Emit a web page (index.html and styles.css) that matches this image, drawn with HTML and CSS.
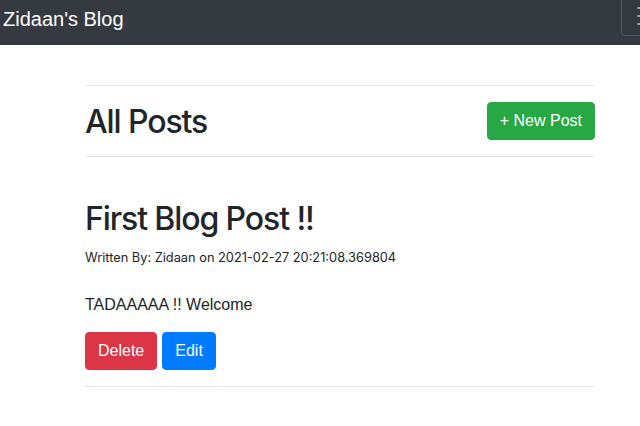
FILE: index.html
```html
<!DOCTYPE html>
<html>
<head>
<meta charset="utf-8">
<link rel="stylesheet" href="styles.css">
</head>
<body>
<nav class="navbar">
  <a class="brand" href="#">Zidaan's Blog</a>
  <button class="toggler" type="button" aria-label="Toggle navigation">
    <svg width="30" height="30" viewBox="0 0 30 30"><path stroke="rgba(255,255,255,0.5)" stroke-width="2" stroke-linecap="round" stroke-miterlimit="10" d="M4 7h22M4 15h22M4 23h22"/></svg>
  </button>
</nav>
<main class="container">
  <hr class="rule">
  <div class="head-row">
    <h2 class="title">All Posts</h2>
    <a class="btn btn-green" href="#">+ New Post</a>
  </div>
  <hr class="rule">
  <article class="post">
    <h2 class="title post-title">First Blog Post !!</h2>
    <p class="meta">Written By: Zidaan on 2021-02-27 20:21:08.369804</p>
    <p class="body">TADAAAAA !! Welcome</p>
    <div class="actions">
      <a class="btn btn-red" href="#">Delete</a>
      <a class="btn btn-blue" href="#">Edit</a>
    </div>
  </article>
  <hr class="rule">
</main>
</body>
</html>
```
FILE: styles.css
```css
* { box-sizing: border-box; }
html, body { margin: 0; padding: 0; }
body {
  font-family: Inter, "Liberation Sans", sans-serif;
  font-size: 16px;
  line-height: 1.5;
  color: #212529;
  background: #fff;
  overflow: hidden;
}
.navbar {
  height: 45px;
  background: #343a40;
  display: flex;
  align-items: flex-start;
  justify-content: space-between;
  overflow: hidden;
}
.brand {
  color: #fff;
  text-decoration: none;
  font-family: "Liberation Sans", Arial, sans-serif;
  font-size: 20px;
  line-height: 30px;
  padding: 4px 0 0 3px;
}
.toggler {
  margin-top: -4px;
  margin-right: -37px;
  width: 56px;
  height: 40px;
  padding: 4px 12px;
  background: transparent;
  border: 1px solid rgba(255,255,255,0.15);
  border-radius: 4px;
  display: flex;
  align-items: center;
  justify-content: center;
}
.toggler svg { display: block; }
.container {
  width: 510px;
  margin-left: 85px;
  padding-top: 40px;
}
.rule {
  margin: 0;
  border: 0;
  border-top: 1px solid rgba(0,0,0,0.1);
}
.head-row {
  display: flex;
  justify-content: space-between;
  align-items: center;
  padding: 16px 0 16px;
}
.title {
  margin: 0;
  font-size: 32px;
  font-weight: 500;
  line-height: 1.2;
  letter-spacing: -1.1px;
}
.head-row .title { position: relative; top: 1px; }
.post { padding-top: 43px; padding-bottom: 16px; }
.meta {
  margin: 9px 0 0;
  font-size: 12.8px;
}
.body {
  margin: 26px 0 0;
  font-family: "Liberation Sans", Arial, sans-serif;
}
.actions {
  display: flex;
  gap: 5px;
  margin-top: 15px;
}
.btn {
  display: inline-block;
  font-family: "Liberation Sans", Arial, sans-serif;
  font-size: 16px;
  line-height: 24px;
  padding: 6px 12px;
  border-radius: 4px;
  color: #fff;
  text-decoration: none;
  border: 1px solid transparent;
}
.btn-green { background: #28a745; border-color: #28a745; }
.btn-red { background: #dc3545; border-color: #dc3545; }
.btn-blue { background: #007bff; border-color: #007bff; }
```
